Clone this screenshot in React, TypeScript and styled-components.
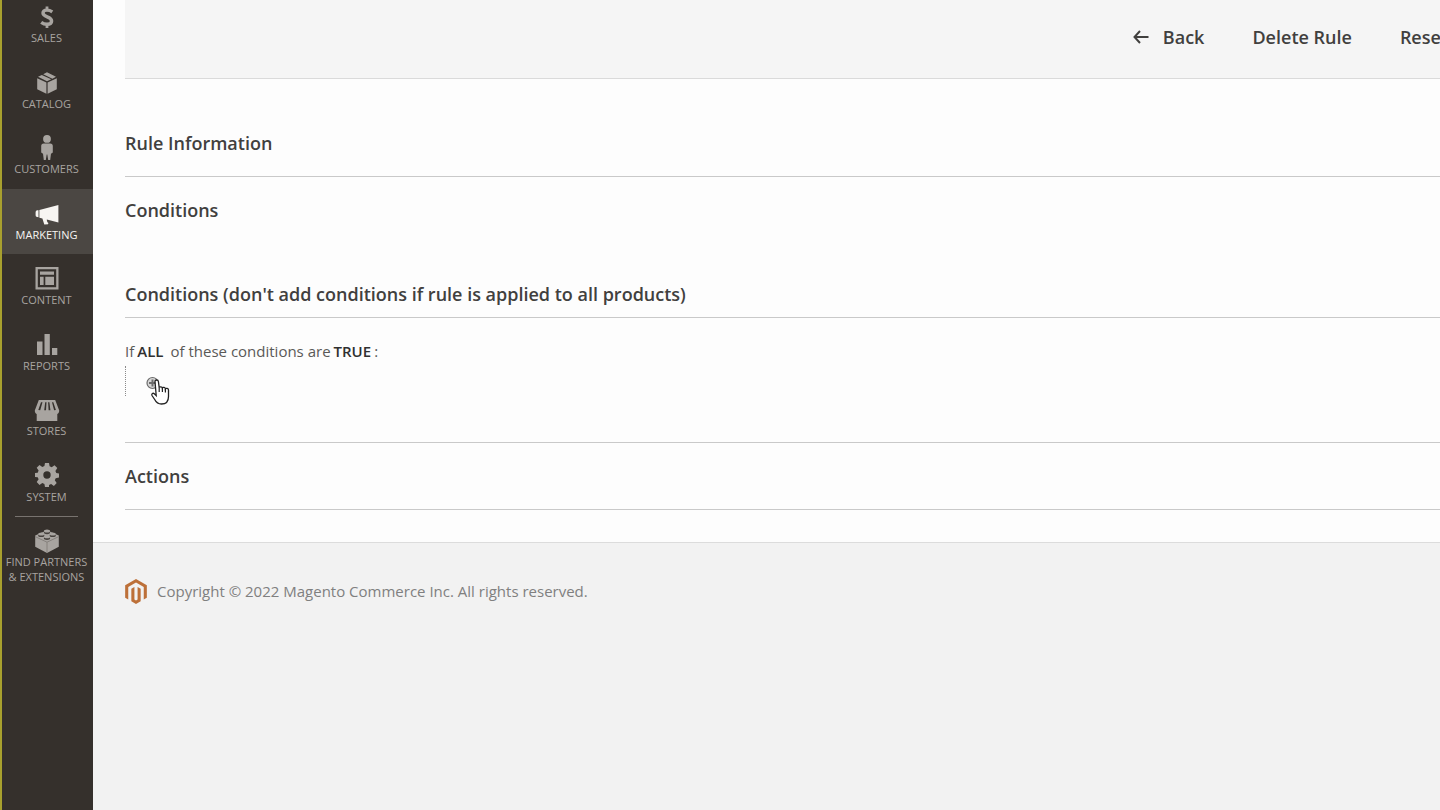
import React from 'react';
import styled, { createGlobalStyle, css } from 'styled-components';

const Global = createGlobalStyle`
  *, *::before, *::after { box-sizing: border-box; }
  body { margin: 0; background: #f2f2f2; color: #41403e; font: 15px/20px 'Open Sans', sans-serif; }
  h1, h2, h3, p, ul { margin: 0; padding: 0; }
`;

const Page = styled.div`
  display: flex;
  min-height: 100vh;
  overflow: hidden;
`;

const Sidebar = styled.nav`
  flex: none;
  width: 93px;
  background: #35302c;
  box-shadow: inset 2px 0 #a8a02e;
`;

const Menu = styled.ul`
  display: flex;
  flex-direction: column;
  height: 524px;
  margin-top: -8px;
  list-style: none;
`;

const MenuItem = styled.li`
  flex: 1;
  display: flex;
`;

const MenuLink = styled.a<{ $active?: boolean }>`
  flex: 1;
  display: flex;
  flex-direction: column;
  align-items: center;
  padding-top: 12px;
  border: solid transparent;
  border-width: 0 2px;
  color: #a8a4a0;
  font-size: 11px;
  line-height: 15px;
  text-align: center;
  text-transform: uppercase;
  text-decoration: none;
  white-space: nowrap;
  ${(p) => p.$active && css`
    color: #f7f5f2;
    background: #4b4743 padding-box;
    border-right-width: 0;
    padding-right: 2px;
  `}
`;

const Partners = styled.div`
  display: flex;
  &::before {
    content: '';
    position: absolute;
    width: 63px;
    height: 1px;
    margin-left: 15px;
    background: #78736f;
  }
`;

const MenuIcon = styled.svg`
  flex: none;
  width: 26px;
  height: 26px;
  fill: currentColor;
`;

const Content = styled.div`
  flex: 1;
  min-width: 0;
  display: flex;
  flex-direction: column;
`;

const Main = styled.main`
  padding-left: 32px;
  padding-bottom: 32px;
  background: #fdfdfd;
  border-bottom: 1px solid #dcdcdc;
`;

const Toolbar = styled.div`
  display: flex;
  justify-content: flex-end;
  align-items: center;
  gap: 48px;
  height: 79px;
  padding-bottom: 4px;
  margin-bottom: 31px;
  background: #f5f5f5;
  border-bottom: 1px solid #dadada;
  overflow: hidden;
`;

const ToolButton = styled.button`
  display: flex;
  align-items: center;
  gap: 14px;
  padding: 0;
  border: 0;
  background: none;
  color: #41403e;
  font: 600 18px/24px 'Open Sans', sans-serif;
  white-space: nowrap;
  &:last-child { margin-right: -8px; }
`;

const Section = styled.section`
  border-bottom: 1px solid #c9c9c9;
`;

const SectionTitle = styled.h2`
  padding: 21px 0;
  font-size: 18px;
  line-height: 24px;
  font-weight: 600;
`;

const Legend = styled.h3`
  padding: 39px 0 11px;
  border-bottom: 1px solid #c9c9c9;
  font-size: 18px;
  line-height: 24px;
  font-weight: 600;
`;

const Rule = styled.div`
  padding: 23px 0 46px;
`;

const RuleLine = styled.p`
  display: flex;
  gap: 3px;
  margin-bottom: 5px;
  color: #5a5957;
`;

const RuleLink = styled.a<{ $wide?: boolean }>`
  color: #303030;
  font-weight: 600;
  text-decoration: none;
  margin-right: ${(p) => (p.$wide ? 4 : 0)}px;
`;

const Children = styled.div`
  display: flex;
  height: 30px;
  padding: 10px 0 0 20px;
  border-left: 1px dotted #8a8a8a;
`;

const AddButton = styled.button`
  display: flex;
  position: relative;
  padding: 0;
  width: 14px;
  height: 14px;
  border: 0;
  background: none;
`;

const Pointer = styled.svg`
  position: absolute;
  left: 4px;
  top: 3px;
  width: 22px;
  height: 27px;
`;

const Footer = styled.footer`
  display: flex;
  align-items: flex-start;
  gap: 10px;
  padding: 36px 32px;
  color: #808080;
`;

const Copyright = styled.p`
  line-height: 24px;
`;

type Item = { label: string; icon: React.ReactNode; active?: boolean };

const items: Item[] = [
  {
    label: 'Sales',
    icon: (
      <g fill="none" stroke="currentColor" strokeWidth="3.400">
        <path d="M18.300 7.800C16.500 6.600 14.800 6.100 13 6.100c-2.500 0-4 1.200-4 3 0 4.600 8.600 2.900 8.600 7.800 0 2.100-1.800 3.400-4.600 3.400-2.100 0-4-.6-5.800-1.900" />
        <path d="M13 2.500v4M13 20v4" strokeWidth="2.800" />
      </g>
    ),
  },
  {
    label: 'Catalog',
    icon: (
      <>
        <path d="M3.200 8.200l9.200 4.200v11.400l-9.200-4.600zM22.800 8.200l-9.200 4.200v11.400l9.200-4.600z" />
        <path d="M4 6.800l3.800-1.900 9.400 4.400L13 11.300zM9.200 4.200L13 2.300l9 4.500-3.600 1.900z" />
      </>
    ),
  },
  { label: 'Customers', icon: <path d="M13 0a3.900 3.900 0 1 1 0 7.800A3.900 3.900 0 0 1 13 0zm-3.300 8.500h6.600c1.700 0 2.500.9 2.500 2.500v6.500l-1.800 1.200-.8 6.300h-2l-.9-5.500h-.6l-.9 5.500h-2L9 18.700l-1.800-1.200V11c0-1.600.8-2.500 2.500-2.500z" /> },
  { label: 'Marketing', active: true, icon: <path d="M1.600 11.500c0-1.200.5-2 1.700-2.200l1.200-.1v7l-1.200-.2c-1.200-.2-1.700-1-1.700-2.100zM5.400 9l19-5v17.500l-11.600-3c.1 1.700.6 2.900 1.600 3.500l-.4 1.300-3.700.200-1.900-6-3-.8z" /> },
  { label: 'Content', icon: <path fillRule="evenodd" d="M1.500 1h23v22.500h-23zm2.300 2.300v17.900h18.400V3.300zM6 5.500h14v3.300H6zm0 5.300h3.600V19H6zm5.300 0H20V19h-8.700z" /> },
  { label: 'Reports', icon: <path d="M3 9.500h5.500V23H3zM10.500 2h5.300v21h-5.300zM18 16h5.300v7H18z" /> },
  { label: 'Stores', icon: <path fillRule="evenodd" d="M4.800 3h16.400l4 10.500c0 1.700-.7 2.900-1.900 3.500V24H2.700v-7C1.500 16.400.8 15.200.8 13.500zM7 5.200L4.300 13l1.900.3 2.300-8.100zm4.200 0l-1 8.100h1.800l.5-8.100zm2.900 0l.5 8.100h1.800l-1-8.100zm3.900 0l2.100 8.100 1.800-.3L19.300 5.200z" /> },
  {
    label: 'System',
    icon: (
      <path
        transform="translate(0 -1)"
        fillRule="evenodd"
        d="M11 1h4l.6 3.300 2.100.9 2.800-1.900 2.800 2.800-1.900 2.800.9 2.100L25 11.600v4l-3.300.6-.9 2.100 1.900 2.800-2.800 2.800-2.800-1.900-2.100.9L15 25h-4l-.6-3.100-2.100-.9-2.800 1.900-2.800-2.800 1.900-2.800-.9-2.100L1 15v-4l2.700-.3.900-2.100-1.900-2.800L5.500 3l2.800 1.900 2.100-.9zm2 8.300a3.700 3.700 0 1 0 0 7.400 3.700 3.700 0 0 0 0-7.400z"
      />
    ),
  },
];

const studs = [[13, 3.8], [7.300, 6.6], [18.700, 6.6], [13, 9.400]];

const blocks = (
  <>
    <path d="M1.200 7.600L13 2.300l11.800 5.300v11.200L13 25 1.200 18.800z" />
    <path d="M1.200 8.600L13 14.200l11.800-5.600M13 14.200V25" fill="none" stroke="#7d7975" strokeWidth="0.800" />
    {studs.map(([x, y]) => (
      <g key={`${x}-${y}`}>
        <ellipse cx={x} cy={y + 0.8} rx="3.100" ry="1.700" fill="#45403c" />
        <ellipse cx={x} cy={y - 0.7} rx="3" ry="1.500" />
      </g>
    ))}
  </>
);

export default function App() {
  return (
    <Page>
      <Global />
      <Sidebar>
        <Menu>
          {items.map((i) => (
            <MenuItem key={i.label}>
              <MenuLink href="#" $active={i.active}>
                <MenuIcon viewBox="0 0 26 26" aria-hidden>{i.icon}</MenuIcon>
                {i.label}
              </MenuLink>
            </MenuItem>
          ))}
        </Menu>
        <Partners>
          <MenuLink href="#">
            <MenuIcon viewBox="0 0 26 26" aria-hidden>{blocks}</MenuIcon>
            <span>Find Partners<br />&amp; Extensions</span>
          </MenuLink>
        </Partners>
      </Sidebar>
      <Content>
        <Main>
          <Toolbar>
            <ToolButton type="button">
              <svg width="16" height="14" viewBox="0 0 16 14" fill="none" stroke="currentColor" strokeWidth="2" aria-hidden>
                <path d="M15.500 7H1.500M7 1L1.500 7 7 13" />
              </svg>
              Back
            </ToolButton>
            <ToolButton type="button">Delete Rule</ToolButton>
            <ToolButton type="button">Reset</ToolButton>
          </Toolbar>
          <Section>
            <SectionTitle>Rule Information</SectionTitle>
          </Section>
          <Section>
            <SectionTitle>Conditions</SectionTitle>
            <Legend>Conditions (don't add conditions if rule is applied to all products)</Legend>
            <Rule>
              <RuleLine>
                If <RuleLink href="#" $wide>ALL</RuleLink> of these conditions are <RuleLink href="#">TRUE</RuleLink> :
              </RuleLine>
              <Children>
                <AddButton type="button" aria-label="Add">
                  <svg width="14" height="14" viewBox="0 0 14 14" fill="none" stroke="#6b6b6b" aria-hidden>
                    <circle cx="6.500" cy="7" r="5.500" strokeWidth="1.200" fill="#d6d6d6" />
                    <path d="M6.500 3.500v7M3 7h7" strokeWidth="2" />
                  </svg>
                  <Pointer viewBox="0 0 22 27" aria-hidden>
                    <path
                      d="M5 2.500c0-2 3.200-2 3.400 0l.8 6.200c.3-1.300 3-1.200 3.200.3.500-1 2.900-.8 3 .8.600-.9 3.100-.5 3.100 1.200v6.500c0 4.500-2.500 7.500-7 7.500-3.600 0-5.400-1.700-6.800-4.500L2 16.500c-.8-1.800 1-2.900 2.300-1.800l1.900 1.800z"
                      fill="#fff"
                      stroke="#222"
                      strokeWidth="1.300"
                    />
                    <path d="M9.200 8.500v4.500M12.400 9v4M15.400 10v3.500" stroke="#222" strokeWidth="1.200" />
                  </Pointer>
                </AddButton>
              </Children>
            </Rule>
          </Section>
          <Section>
            <SectionTitle>Actions</SectionTitle>
          </Section>
        </Main>
        <Footer>
          <svg width="22" height="25" viewBox="0 0 26 30" fill="#bd7039" aria-hidden>
            <path d="M13 0L0 7.500v15l3.700 2.100V9.600L13 4.300l9.300 5.300v15l3.700-2.100v-15z" />
            <path d="M14.900 24.600L13 25.700l-1.900-1.100V9.600l-3.700 2.100v15L13 30l5.600-3.200v-15l-3.700-2.100z" />
          </svg>
          <Copyright>Copyright © 2022 Magento Commerce Inc. All rights reserved.</Copyright>
        </Footer>
      </Content>
    </Page>
  );
}
